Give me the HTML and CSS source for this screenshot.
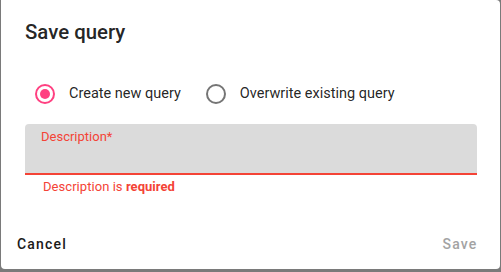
FILE: index.html
```html
<!DOCTYPE html>
<html lang="en">
<head>
<meta charset="utf-8">
<title>Save query</title>
<link rel="stylesheet" href="styles.css">
</head>
<body>
<div class="dialog">
  <h2 class="title">Save query</h2>
  <div class="content">
    <div class="radio-group">
      <label class="radio">
        <svg class="radio-icon checked" viewBox="0 0 24 24" width="24" height="24"><circle cx="12" cy="12" r="9" fill="none" stroke="currentColor" stroke-width="2"/><circle cx="12" cy="12" r="5" fill="currentColor"/></svg>
        <span class="radio-label">Create new query</span>
      </label>
      <label class="radio">
        <svg class="radio-icon" viewBox="0 0 24 24" width="24" height="24"><circle cx="12" cy="12" r="9" fill="none" stroke="currentColor" stroke-width="2"/></svg>
        <span class="radio-label">Overwrite existing query</span>
      </label>
    </div>
    <div class="field">
      <span class="field-label">Description*</span>
    </div>
    <p class="helper">Description is <strong>required</strong></p>
  </div>
  <div class="actions">
    <span class="btn">Cancel</span>
    <span class="btn disabled">Save</span>
  </div>
</div>
</body>
</html>
```
FILE: styles.css
```css
html, body {
  margin: 0;
  padding: 0;
}
body {
  background: #7a7a7a;
  height: 272px;
  overflow: hidden;
  font-family: Roboto, "Liberation Sans", sans-serif;
}
.dialog {
  margin-left: 1px;
  width: 499px;
  height: 269px;
  background: #fff;
  border-radius: 0 4px 4px 4px;
  display: flex;
  flex-direction: column;
  box-sizing: border-box;
}
.title {
  margin: 0;
  padding: 16px 24px 0;
  font-size: 20.4px;
  line-height: 32px;
  font-weight: 500;
  color: rgba(0, 0, 0, 0.87);
}
.content {
  padding: 25px 22px 0 24px;
}
.radio-group {
  display: flex;
  align-items: center;
  height: 42px;
}
.radio {
  display: flex;
  align-items: center;
  margin-right: 15px;
}
.radio-icon {
  display: block;
  margin-left: 8px;
  color: #757575;
}
.radio-icon.checked {
  color: #ff4081;
}
.radio-label {
  margin-left: 12px;
  font-size: 14.5px;
  line-height: 24px;
  color: rgba(0, 0, 0, 0.87);
}
.field {
  margin-top: 9px;
  height: 44px;
  background: #dbdbdb;
  border-radius: 4px 4px 0 0;
  border-bottom: 2px solid #f44336;
  padding: 5px 16px 0;
  box-sizing: content-box;
  width: 420px;
}
.field-label {
  display: block;
  font-size: 13px;
  line-height: 16px;
  color: #f44336;
}
.helper {
  margin: 4px 0 0 18px;
  font-size: 13px;
  line-height: 16px;
  letter-spacing: 0.05px;
  color: #f44336;
}
.helper strong {
  font-weight: 700;
}
.actions {
  margin-top: auto;
  padding: 8px;
  display: flex;
  justify-content: space-between;
  align-items: center;
}
.btn {
  min-width: 64px;
  box-sizing: border-box;
  height: 36px;
  padding: 7px 8px 5px;
  font-size: 14px;
  line-height: 24px;
  font-weight: 500;
  letter-spacing: 1.2px;
  color: #1a1a1a;
}
.btn.disabled {
  color: #a3a3a3;
  text-align: center;
}
.btn:first-child {
  min-width: 0;
}
```
